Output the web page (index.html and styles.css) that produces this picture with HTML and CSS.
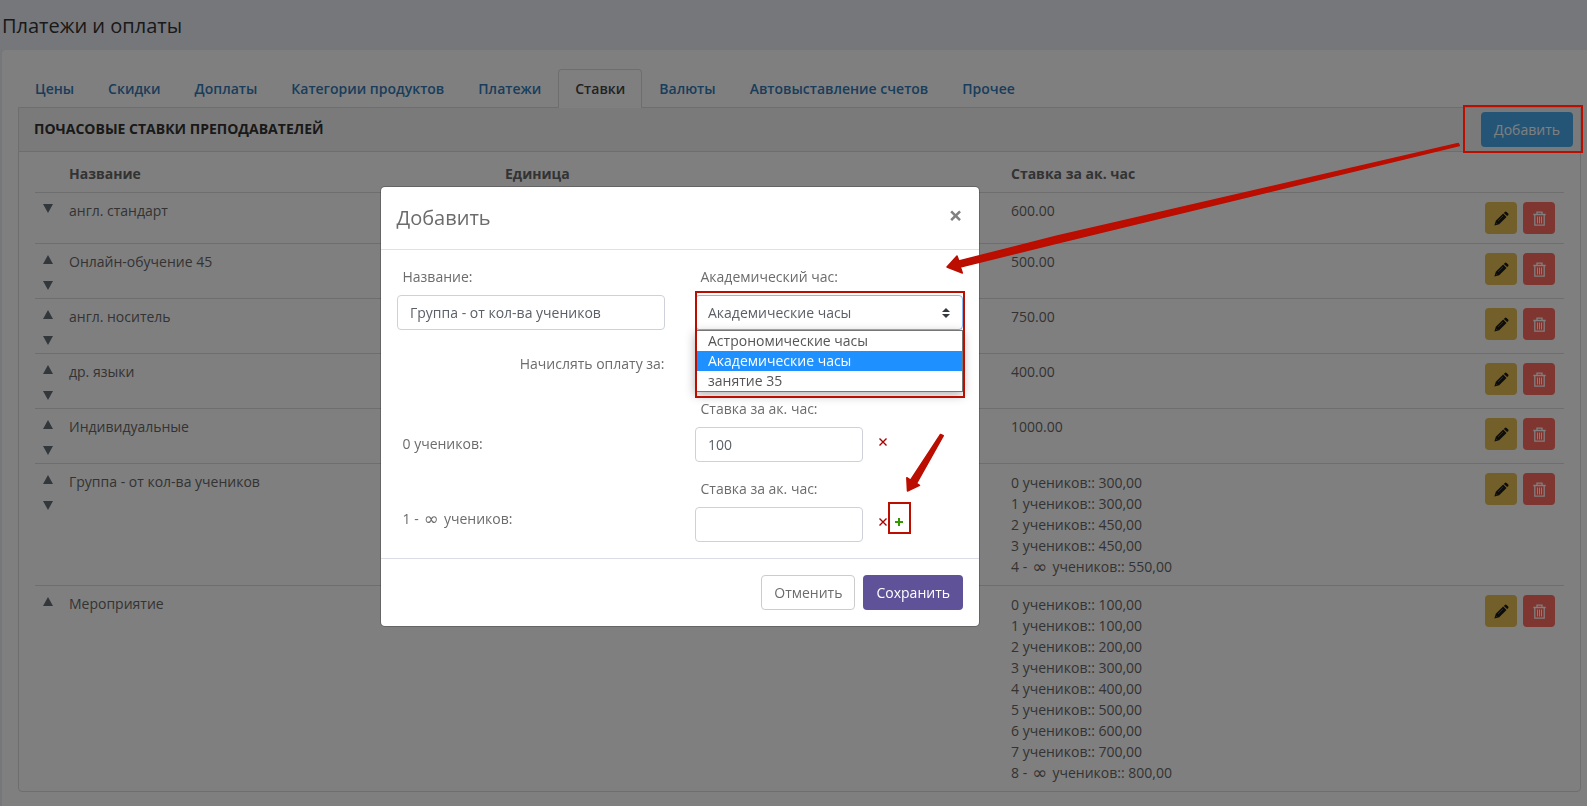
FILE: index.html
```html
<!DOCTYPE html>
<html lang="ru">
<head>
  <meta charset="UTF-8" />
  <meta name="viewport" content="width=device-width, initial-scale=1.0"/>
  <title>Платежи и оплаты</title>
  <link rel="stylesheet" href="styles.css">
</head>
<body>
  <svg class="sprite">
    <symbol id="pencil" viewBox="0 0 15 15">
      <path d="M.4 14.600l1.400-4.800 7.400-7.200 3.300 3.300-7.300 7.300z"/>
      <path d="M9.900 1.900l.9-1q.9-.8 1.800 0l1.500 1.500q.9.9 0 1.800l-1 .9z"/>
      <path class="cut" d="M4 10l5-5M1.800 11.700l1.500 1.500"/>
    </symbol>
    <symbol id="trash" viewBox="0 0 13 15">
      <path d="M.3 3.500h12.400M4 3V1.200h5V3M1.800 3.500v10.700h9.400V3.500"/>
      <path class="bars" d="M4.500 5.500v7M6.500 5.500v7M8.500 5.500v7"/>
    </symbol>
    <symbol id="up" viewBox="0 0 10 9"><path d="M0 9L5 0l5 9z"/></symbol>
    <symbol id="down" viewBox="0 0 10 9"><path d="M0 0l5 9 5-9z"/></symbol>
  </svg>

  <h1>Платежи и оплаты</h1>

  <div class="card">
    <div class="tabs">
      <a class="tab">Цены</a>
      <a class="tab">Скидки</a>
      <a class="tab">Доплаты</a>
      <a class="tab">Категории продуктов</a>
      <a class="tab">Платежи</a>
      <a class="tab active">Ставки</a>
      <a class="tab">Валюты</a>
      <a class="tab">Автовыставление счетов</a>
      <a class="tab">Прочее</a>
    </div>
    <div class="panel">
      <div class="panel-head">
        <span>Почасовые ставки преподавателей</span>
        <button class="btn btn-info">Добавить</button>
      </div>
      <table>
        <thead>
          <tr>
            <th class="col-sort"></th>
            <th class="col-name">Название</th>
            <th class="col-unit">Единица</th>
            <th>Ставка за ак. час</th>
            <th class="col-actions"></th>
          </tr>
        </thead>
        <tbody id="rates"></tbody>
      </table>
    </div>
  </div>

  <div class="backdrop"></div>

  <div class="modal">
    <div class="modal-head">
      <span>Добавить</span>
      <button class="close">×</button>
    </div>
    <div class="modal-body">
      <div class="row">
        <div class="field">
          <label>Название:</label>
          <div class="input">Группа - от кол-ва учеников</div>
        </div>
        <div class="field">
          <label>Академический час:</label>
          <div class="input select">Академические часы
            <svg width="8" height="10" viewBox="0 0 8 10"><path d="M0 4l4-4 4 4zM0 6h8l-4 4z"/></svg>
          </div>
          <div class="options">
            <div>Астрономические часы</div>
            <div class="selected">Академические часы</div>
            <div>занятие 35</div>
          </div>
        </div>
      </div>
      <div class="pay-for">Начислять оплату за:</div>
      <div class="row">
        <div class="count">0 учеников:</div>
        <div class="field">
          <label>Ставка за ак. час:</label>
          <div class="rate">
            <div class="input">100</div>
            <svg class="remove" width="8" height="8" viewBox="0 0 8 8"><path d="M.5.5l7 7M7.500.5l-7 7"/></svg>
          </div>
        </div>
      </div>
      <div class="row">
        <div class="count last">1 - <i>∞</i> учеников:</div>
        <div class="field">
          <label>Ставка за ак. час:</label>
          <div class="rate">
            <div class="input"></div>
            <svg class="remove" width="8" height="8" viewBox="0 0 8 8"><path d="M.5.5l7 7M7.500.5l-7 7"/></svg>
            <svg class="add" width="8" height="8" viewBox="0 0 8 8"><path d="M4 0v8M0 4h8"/></svg>
          </div>
        </div>
      </div>
    </div>
    <div class="modal-foot">
      <button class="btn btn-default">Отменить</button>
      <button class="btn btn-primary">Сохранить</button>
    </div>
  </div>

  <!-- подсказки поверх интерфейса -->
  <div class="mark mark-button"></div>
  <div class="mark mark-select"></div>
  <div class="mark mark-plus"></div>
  <svg class="arrows" width="1587" height="806" viewBox="0 0 1587 806">
    <path d="M947 267l10-11 1.800 5 97.500-24.800 402-92.600 1 2-402 97.400-97 24 2 6z"/>
    <path d="M907.500 491l-.7-13.300 3.700 2.500L940.500 434.500l2.800 1.200L916.500 483.500l3 1.800z"/>
  </svg>

  <script>
    const rates = [
      { name: "англ. стандарт", rate: "600.00" },
      { name: "Онлайн-обучение 45", rate: "500.00" },
      { name: "англ. носитель", rate: "750.00" },
      { name: "др. языки", rate: "400.00" },
      { name: "Индивидуальные", rate: "1000.00" },
      { name: "Группа - от кол-ва учеников", list: [300, 300, 450, 450, 550] },
      { name: "Мероприятие", list: [100, 100, 200, 300, 400, 500, 600, 700, 800] }
    ];

    function rateText(item) {
      if (!item.list) return item.rate;
      return item.list.map((sum, i) => {
        const tail = i === item.list.length - 1 ? " - <i>∞</i>" : "";
        return `<div>${i}${tail} учеников:: ${sum},00</div>`;
      }).join("");
    }

    function sortIcons(i) {
      const up = i > 0 ? '<svg><use href="#up"/></svg>' : "";
      const down = i < rates.length - 1 ? '<svg><use href="#down"/></svg>' : "";
      return up + down;
    }

    document.getElementById("rates").innerHTML = rates.map((item, i) => `
      <tr>
        <td class="sort"><div>${sortIcons(i)}</div></td>
        <td class="text">${item.name}</td>
        <td></td>
        <td class="${item.list ? "list" : "text"}">${rateText(item)}</td>
        <td>
          <div class="actions">
            <button class="edit"><svg><use href="#pencil"/></svg></button>
            <button class="delete"><svg><use href="#trash"/></svg></button>
          </div>
        </td>
      </tr>`).join("");
  </script>
</body>
</html>
```
FILE: styles.css
```css
* { box-sizing: border-box; }
body {
  margin: 0; height: 806px; overflow: hidden;
  font: 14px/21px 'Open Sans', 'Noto Sans', sans-serif;
  color: #676767; background: #edeef6;
}
button { font: inherit; border: none; cursor: pointer; }
.sprite { display: none; }
h1 {
  margin: 0; padding: 11px 0 9px 2px;
  font-size: 20px; line-height: 30px; font-weight: 400; color: #333;
}
.card {
  margin-left: 2px; padding: 19px 6px 0 16px; height: 770px;
  background: #fff; border-radius: 4px 0 0 0;
}

/* tabs */
.tabs { display: flex; }
.tab {
  padding: 8px 16px; border: 1px solid transparent; border-bottom: none;
  font-weight: 600; color: #337ab7;
}
.tab.active {
  position: relative;
  margin-bottom: -1px; padding-bottom: 9px;
  color: #444; background: #fff;
  border-color: #dcdcdc; border-radius: 4px 4px 0 0;
}
.panel { border: 1px solid #dcdcdc; border-radius: 0 0 4px 4px; height: 685px; }
.panel-head {
  display: flex; justify-content: space-between; align-items: center;
  height: 44px; padding: 0 7px 0 15px;
  background: #f5f5f5; border-bottom: 1px solid #dcdcdc;
}
.panel-head span {
  padding-bottom: 2px;
  font-weight: 700; text-transform: uppercase; color: #333;
}
.btn { height: 35px; padding: 0 12px; border-radius: 4px; border: 1px solid transparent; }
.btn-info { background: #48aaed; color: #fff; }

/* rates table */
table {
  width: 1529px; margin: 3px 16px 0;
  border-collapse: separate; border-spacing: 0; table-layout: fixed;
}
th { padding: 8px; text-align: left; font-weight: 700; }
td { padding: 8px; vertical-align: top; border-top: 1px solid #dcdcdc; }
td.text { padding-top: 7px; }
.col-sort { width: 26px; }
.col-name { width: 436px; }
.col-unit { width: 506px; }
.col-actions { width: 88px; }
td.sort { padding: 11px 8px 7px; }
.sort div { display: flex; flex-direction: column; gap: 17px; min-height: 32px; }
.sort svg { width: 10px; height: 9px; fill: #646e78; }
.sort svg + svg { margin-bottom: 1px; }
.actions { display: flex; gap: 6px; padding: 1px; }
.actions button { width: 32px; height: 32px; padding: 0; border-radius: 4px; }
.actions svg { display: block; margin: auto; height: 15px; }
.edit { background: #e6be52; }
.edit svg { width: 15px; fill: #1a1a1a; }
#pencil .cut { fill: none; stroke: #8a7335; stroke-width: .7; }
.delete { background: #ff6a61; }
.delete svg { width: 13px; fill: none; stroke: #fff; stroke-width: 1.3; }
#trash .bars { stroke-width: 1; }
i {
  display: inline-block; width: 18px; height: 14px;
  font: 18px/17px 'DejaVu Sans', sans-serif; text-align: center;
  vertical-align: -1px;
}

.backdrop { position: fixed; inset: 0; background: rgba(0,0,0,0.5); }

/* modal */
.modal {
  position: absolute; left: 380px; top: 186px; width: 600px;
  background: #fff; background-clip: padding-box;
  border: 1px solid rgba(0,0,0,0.2); border-radius: 5px;
  color: #6c6c6c;
}
.modal-head {
  display: flex; justify-content: space-between; align-items: flex-start;
  height: 63px; padding: 16px 16px 16px 15.5px; border-bottom: 1px solid #dfe1e5;
  font-size: 20px; line-height: 30px;
}
.close {
  padding: 0; width: 15px; margin-top: -3px;
  background: none; color: #808080; font-size: 24px; font-weight: 700;
}
.modal-body { height: 308px; padding: 16px 16px 0; }
.row { display: flex; gap: 30px; }
.field { width: 268px; position: relative; }
label { display: block; padding: 0 5.5px; margin-bottom: 8px; }
.input {
  height: 35px; padding: 6px 12px; color: #5b6068;
  border: 1px solid #ced1d9; border-radius: 4px; background: #fff;
}
.select {
  display: flex; justify-content: space-between; align-items: center;
  border-color: #86b7f0;
}
.select svg { fill: #343a40; }
.options {
  position: absolute; left: 0; top: 64px; width: 268px; z-index: 2;
  background: #fff; border: 1px solid #767676; color: #555;
  box-shadow: 0 3px 10px rgba(0,0,0,0.3); line-height: 20px;
}
.options div { padding: 0 12px; }
.options .selected { background: #1e90ff; color: #fff; }
.pay-for { width: 267.5px; padding-top: 23px; height: 68px; text-align: right; }
.row + .row { margin-top: 16px; }
.count { width: 268px; padding: 35px 5.5px 0; }
.count.last { padding-top: 30px; }
.rate { display: flex; align-items: flex-start; }
.rate .input { width: 168px; }
.remove { margin: 11px 0 0 15.5px; stroke: #a00; stroke-width: 1.4; }
.add { margin: 11px 0 0 8.5px; stroke: #390; stroke-width: 2; }
.modal-foot {
  display: flex; justify-content: flex-end; gap: 8px;
  padding: 16px; border-top: 1px solid #dcdce6;
}
.btn-default { background: #fff; color: #6c6c6c; border-color: #ccc; }
.btn-primary { background: #5f5299; color: #fff; }

/* red marks */
.mark { position: absolute; z-index: 3; border: 2px solid #bb0d00; }
.mark-button { left: 1463px; top: 105px; width: 120px; height: 48px; }
.mark-select { left: 695px; top: 291px; width: 270px; height: 107px; }
.mark-plus { left: 888px; top: 502px; width: 23px; height: 32px; }
.arrows {
  position: absolute; left: 0; top: 0;
  fill: #bb0d00; stroke: #bb0d00; stroke-width: 1.5; stroke-linejoin: round;
}
```
